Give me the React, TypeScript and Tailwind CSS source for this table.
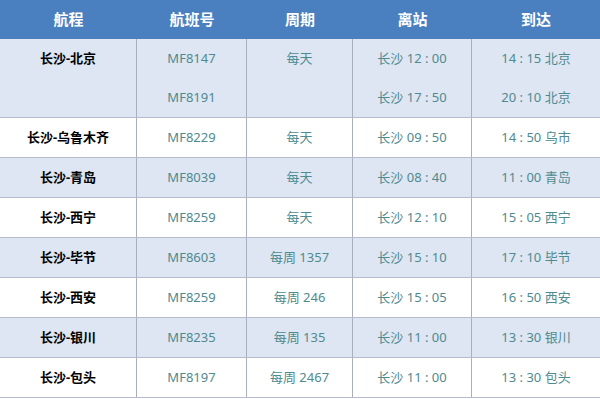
const rows = [
  { route: '长沙-北京', flights: ['MF8147', 'MF8191'], days: '每天', dep: ['长沙 12 : 00', '长沙 17 : 50'], arr: ['14 : 15 北京', '20 : 10 北京'] },
  { route: '长沙-乌鲁木齐', flights: ['MF8229'], days: '每天', dep: ['长沙 09 : 50'], arr: ['14 : 50 乌市'] },
  { route: '长沙-青岛', flights: ['MF8039'], days: '每天', dep: ['长沙 08 : 40'], arr: ['11 : 00 青岛'] },
  { route: '长沙-西宁', flights: ['MF8259'], days: '每天', dep: ['长沙 12 : 10'], arr: ['15 : 05 西宁'] },
  { route: '长沙-毕节', flights: ['MF8603'], days: '每周 1357', dep: ['长沙 15 : 10'], arr: ['17 : 10 毕节'] },
  { route: '长沙-西安', flights: ['MF8259'], days: '每周 246', dep: ['长沙 15 : 05'], arr: ['16 : 50 西安'] },
  { route: '长沙-银川', flights: ['MF8235'], days: '每周 135', dep: ['长沙 11 : 00'], arr: ['13 : 30 银川'] },
  { route: '长沙-包头', flights: ['MF8197'], days: '每周 2467', dep: ['长沙 11 : 00'], arr: ['13 : 30 包头'] },
];

const headers = ['航程', '航班号', '周期', '离站', '到达'];
const widths = ['w-[137px]', 'w-[110px]', 'w-[106px]', 'w-[119px]', 'w-[128px]'];

function Lines({ items }: { items: string[] }) {
  return (
    <div className="flex flex-col">
      {items.map((t, i) => (
        <div key={i} className="flex h-[39px] items-center justify-center">
          {t}
        </div>
      ))}
    </div>
  );
}

export default function App() {
  return (
    <div className="w-[600px] h-[399px] overflow-hidden bg-white" style={{ fontFamily: '"Noto Sans", "Noto Sans CJK SC", sans-serif' }}>
      <div className="flex h-[39px] bg-[#4a7fc0] text-white text-[15px] font-bold">
        {headers.map((h, i) => (
          <div key={h} className={`${widths[i]} flex items-center justify-center`}>{h}</div>
        ))}
      </div>
      {rows.map((r, idx) => (
        <div
          key={idx}
          className={`flex border-b border-[#b5bdcb] text-[13px] text-[#4f8a90] ${idx % 2 === 0 ? 'bg-[#dde6f2]' : 'bg-white'}`}
        >
          <div className={`${widths[0]} border-r border-[#a8b0bf] text-black font-bold`}>
            <Lines items={[r.route]} />
          </div>
          <div className={`${widths[1]} border-r border-[#a8b0bf]`}>
            <Lines items={r.flights} />
          </div>
          <div className={`${widths[2]} border-r border-[#a8b0bf]`}>
            <Lines items={[r.days]} />
          </div>
          <div className={`${widths[3]} border-r border-[#a8b0bf]`}>
            <Lines items={r.dep} />
          </div>
          <div className={widths[4]}>
            <Lines items={r.arr} />
          </div>
        </div>
      ))}
    </div>
  );
}
